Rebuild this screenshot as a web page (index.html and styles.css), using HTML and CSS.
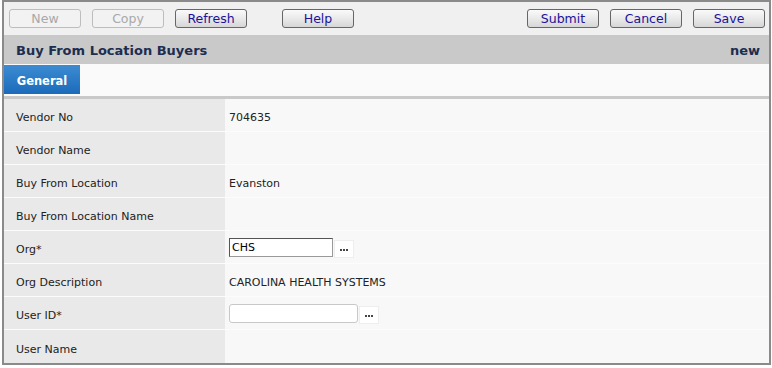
FILE: index.html
```html
<!DOCTYPE html>
<html lang="en">
<head>
  <meta charset="UTF-8" />
  <title>Buy From Location Buyers</title>
  <link rel="stylesheet" href="styles.css">
</head>
<body>
  <div class="page">

    <!-- TOOLBAR -->
    <div class="toolbar">
      <div class="btn-group">
        <button class="btn" disabled>New</button>
        <button class="btn" disabled>Copy</button>
        <button class="btn">Refresh</button>
        <button class="btn btn-help">Help</button>
      </div>
      <div class="btn-group">
        <button class="btn">Submit</button>
        <button class="btn">Cancel</button>
        <button class="btn">Save</button>
      </div>
    </div>

    <!-- TITLE -->
    <div class="title-bar">
      <span>Buy From Location Buyers</span>
      <span>new</span>
    </div>

    <!-- TABS -->
    <div class="tabs">
      <div class="tab active">General</div>
    </div>

    <!-- FORM -->
    <div class="form">
      <div class="row"><div class="label">Vendor No</div><div class="value">704635</div></div>
      <div class="row"><div class="label">Vendor Name</div><div class="value"></div></div>
      <div class="row"><div class="label">Buy From Location</div><div class="value">Evanston</div></div>
      <div class="row"><div class="label">Buy From Location Name</div><div class="value"></div></div>
      <div class="row">
        <div class="label">Org*</div>
        <div class="value has-field">
          <input type="text" class="field field-org" value="CHS">
          <span class="picker"><i></i><i></i><i></i></span>
        </div>
      </div>
      <div class="row"><div class="label">Org Description</div><div class="value">CAROLINA HEALTH SYSTEMS</div></div>
      <div class="row">
        <div class="label">User ID*</div>
        <div class="value has-field">
          <input type="text" class="field field-user">
          <span class="picker"><i></i><i></i><i></i></span>
        </div>
      </div>
      <div class="row"><div class="label">User Name</div><div class="value"></div></div>
    </div>

  </div>
</body>
</html>
```

FILE: styles.css
```css
* {
  margin: 0;
  padding: 0;
  box-sizing: border-box;
}

body {
  font-family: "DejaVu Sans", Verdana, sans-serif;
  font-size: 11px;
  color: #222;
  background: #fff;
}

.page {
  margin-left: 2px;
  width: 769px;
  height: 365px;
  border: 2px solid #8a8a8a;
  background: #f8f8f8;
  overflow: hidden;
}

.toolbar {
  height: 33px;
  background: #f0f0f0;
  display: flex;
  justify-content: space-between;
  padding: 7px 4px 0 5px;
}

.btn-group {
  display: flex;
  gap: 11px;
}

.btn {
  width: 72px;
  height: 19px;
  font-family: "DejaVu Sans", Verdana, sans-serif;
  font-size: 12.5px;
  color: #20129a;
  border: 1px solid #666;
  border-radius: 3px;
  background: linear-gradient(#fafafa, #e6e6e6 60%, #d6d6d6);
  line-height: 16px;
}

.btn:disabled {
  color: #a8a8a8;
  border-color: #bdbdbd;
  background: #f2f2f2;
}

.btn-help {
  margin-left: 24px;
}

.title-bar {
  height: 29px;
  background: #c9c9c9;
  display: flex;
  justify-content: space-between;
  align-items: center;
  padding: 2px 9px 0 12px;
  font-size: 13px;
  font-weight: bold;
  color: #1c2d4f;
}

.tabs {
  height: 35px;
  background: #fafafa;
  border-bottom: 3px solid #c9c9c9;
  padding-top: 1px;
}

.tab {
  width: 76px;
  height: 29px;
  line-height: 32px;
  text-align: center;
  font-size: 11.5px;
  font-weight: bold;
  color: #fff;
}

.tab.active {
  background: linear-gradient(#3c8bd2, #1c6bbb);
}

.form {
  display: flex;
  flex-direction: column;
}

.row {
  display: flex;
  height: 33px;
  border-bottom: 1px solid #fcfcfc;
}

.row:last-child {
  border-bottom: none;
}

.label {
  width: 221px;
  background: #e9e9e9;
  padding: 5px 0 0 12px;
  display: flex;
  align-items: center;
}

.value {
  flex: 1;
  padding: 5px 0 0 4px;
  display: flex;
  align-items: center;
}

.value.has-field {
  padding-top: 1px;
}

.field {
  height: 19px;
  font-family: "DejaVu Sans", Verdana, sans-serif;
  font-size: 11px;
  color: #000;
  padding: 0 2px;
  background: #fff;
}

.field-org {
  width: 104px;
  border: 1px solid #999;
  border-top-color: #555;
  border-left-color: #555;
}

.field-user {
  width: 129px;
  border: 1px solid #c8c8c8;
  border-radius: 3px;
}

.picker {
  width: 20px;
  height: 18px;
  margin-left: 1px;
  margin-top: 3px;
  background: #fff;
  border: 1px solid #eee;
  display: flex;
  justify-content: center;
  align-items: center;
  gap: 1px;
  padding-top: 2px;
}

.picker i {
  width: 2px;
  height: 2px;
  background: #444;
}
```
